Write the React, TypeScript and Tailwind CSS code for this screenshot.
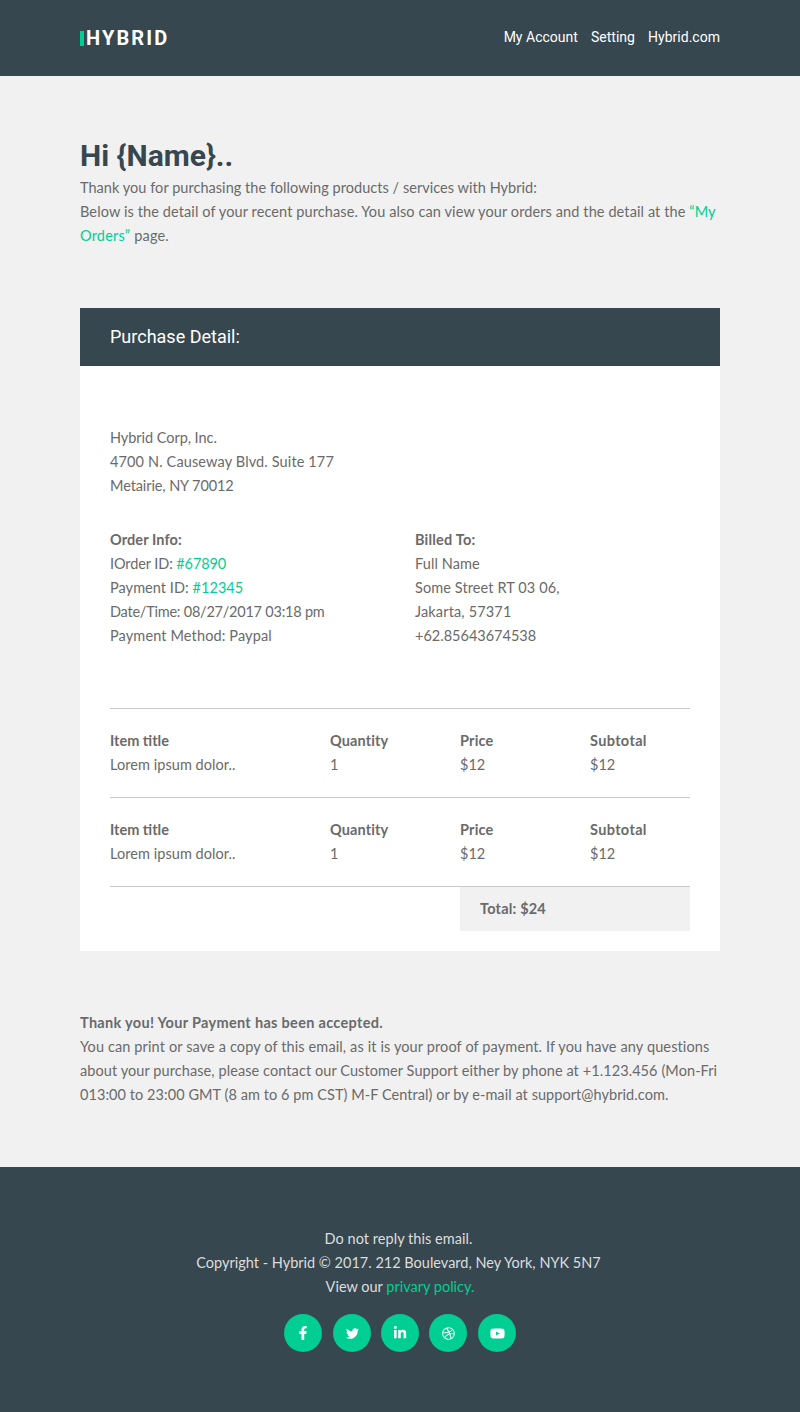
import { FaFacebookF, FaTwitter, FaLinkedinIn, FaDribbble, FaYoutube } from "react-icons/fa";

const Item = () => (
  <div className="flex border-t border-[#c8c8c8] pt-[20px] pb-[20px] h-[89px]">
    <div className="w-[220px]"><b className="font-bold block">Item title</b><span className="tracking-[0.05px]">Lorem ipsum dolor..</span></div>
    <div className="w-[130px]"><b className="font-bold block tracking-[0.1px]">Quantity</b>1</div>
    <div className="w-[130px]"><b className="font-bold block tracking-[0.2px]">Price</b>$12</div>
    <div className="w-[100px]"><b className="font-bold block tracking-[0.35px]">Subtotal</b>$12</div>
  </div>
);

const icons = [
  { I: FaFacebookF, c: "w-[38px] h-[38px] rounded-full bg-[#00ce93] flex items-center justify-center text-white text-[14px]" },
  { I: FaTwitter, c: "w-[38px] h-[38px] ml-[1px] rounded-full bg-[#00ce93] flex items-center justify-center text-white text-[13px]" },
  { I: FaLinkedinIn, c: "w-[38px] h-[38px] rounded-full bg-[#00ce93] flex items-center justify-center text-white text-[14px]" },
  { I: FaDribbble, c: "w-[38px] h-[38px] rounded-full bg-[#00ce93] flex items-center justify-center text-white text-[13px]" },
  { I: FaYoutube, c: "w-[38px] h-[38px] ml-[1px] rounded-full bg-[#00ce93] flex items-center justify-center text-white text-[15px]" },
];

export default function App() {
  return (
    <div className="bg-[#f1f1f1] text-[#6a6a6a] text-[14.5px] leading-[24px] font-['Lato',sans-serif] w-[800px] h-[1412px]">
      <header className="bg-[#37474f] h-[76px] px-[80px] flex items-center justify-between">
        <div className="flex items-center font-['Roboto',sans-serif] font-bold text-white text-[20px] tracking-[2.1px]">
          <span className="w-[4px] h-[15px] bg-[#00ce93] mr-[2px]" />
          HYBRID
        </div>
        <nav className="flex gap-[13px] mb-[2px] font-['Roboto',sans-serif] font-[450] text-white text-[14px] tracking-[0.02px]">
          <span>My Account</span><span>Setting</span><span>Hybrid.com</span>
        </nav>
      </header>
      <section className="px-[80px] pt-[60px]">
        <h1 className="font-['Roboto',sans-serif] font-bold text-[30px] leading-[40px] text-[#37474f]">Hi {"{Name}"}..</h1>
        <p>
          <span className="tracking-[0.04px]">Thank you for purchasing the following products / services with Hybrid:</span><br />
          <span className="tracking-[0.105px]">Below is the detail of your recent purchase. You also can view your orders and the detail at the <span className="text-[#00ce93]">“My</span></span><br />
          <span className="tracking-[0.2px]"><span className="text-[#00ce93]">Orders”</span> page.</span>
        </p>
      </section>
      <section className="mx-[80px] mt-[60px] bg-white">
        <div className="bg-[#37474f] h-[58px] px-[30px] flex items-center font-['Roboto',sans-serif] font-[450] text-white text-[18px]">Purchase Detail:</div>
        <div className="px-[30px] pt-[60px] pb-[20px]">
          <p>
            <span className="tracking-[-0.05px]">Hybrid Corp, Inc.</span><br />
            <span className="tracking-[0.13px]">4700 N. Causeway Blvd. Suite 177</span><br />
            <span className="tracking-[-0.1px]">Metairie, NY 70012</span>
          </p>
          <div className="flex mt-[30px]">
            <div className="w-[305px]">
              <b className="font-bold block tracking-[0.1px]">Order Info:</b>
              <span className="tracking-[-0.1px]">IOrder ID: <span className="text-[#00ce93]">#67890</span></span><br />
              <span className="tracking-[0.05px]">Payment ID: <span className="text-[#00ce93]">#12345</span></span><br />
              <span className="tracking-[-0.23px]">Date/Time: 08/27/2017 03:18 pm</span><br />
              <span className="tracking-[0.13px]">Payment Method: Paypal</span>
            </div>
            <div>
              <b className="font-bold block tracking-[0.2px]">Billed To:</b>
              <span className="tracking-[0.1px]">Full Name</span><br />
              <span className="tracking-[0.1px]">Some Street RT 03 06,</span><br />
              <span className="tracking-[0.15px]">Jakarta, 57371</span><br />
              +62.85643674538
            </div>
          </div>
          <div className="mt-[60px]">
            <Item />
            <Item />
            <div className="border-t border-[#c8c8c8] flex justify-end">
              <div className="w-[230px] h-[44px] bg-[#f1f1f1] px-[20px] flex items-center font-bold tracking-[0.2px]">Total: $24</div>
            </div>
          </div>
        </div>
      </section>
      <section className="px-[80px] pt-[60px]">
        <b className="font-bold block tracking-[0.31px]">Thank you! Your Payment has been accepted.</b>
        <span className="tracking-[0.12px]">You can print or save a copy of this email, as it is your proof of payment. If you have any questions</span><br />
        <span className="tracking-[0.08px]">about your purchase, please contact our Customer Support either by phone at +1.123.456 (Mon-Fri</span><br />
        <span className="tracking-[0.06px]">013:00 to 23:00 GMT (8 am to 6 pm CST) M-F Central) or by e-mail at support@hybrid.com.</span>
      </section>
      <footer className="mt-[60px] bg-[#37474f] h-[245px] pt-[60px] text-center text-[#dddddd]">
        <div className="pr-[3px] tracking-[0.04px]">Do not reply this email.</div>
        <div className="pr-[3px]">Copyright - Hybrid © 2017. 212 Boulevard, Ney York, NYK 5N7</div>
        <div>View our <span className="text-[#00ce93]">privary policy.</span></div>
        <div className="flex justify-center gap-[10px] mt-[15px]">
          {icons.map(({ I, c }, i) => (
            <div key={i} className={c}><I /></div>
          ))}
        </div>
      </footer>
    </div>
  );
}
